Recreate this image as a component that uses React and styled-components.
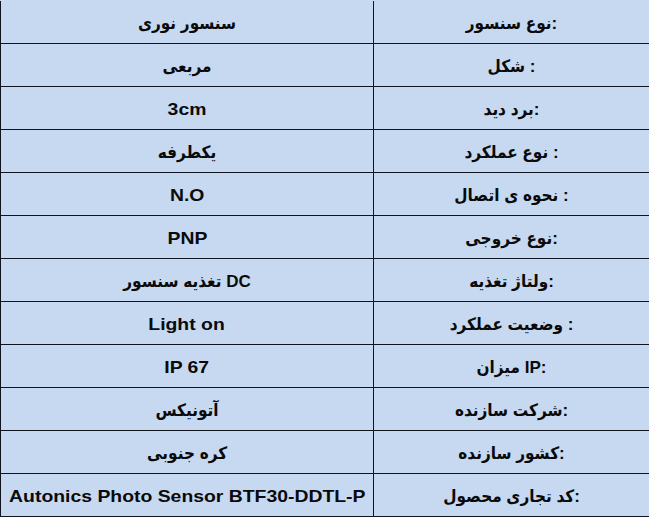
import React from 'react';
import styled, { createGlobalStyle } from 'styled-components';

const GlobalStyle = createGlobalStyle`
  html, body {
    margin: 0;
    padding: 0;
    background-color: #c6d9f1;
  }
`;

const Table = styled.div`
  width: 649px;
  padding-top: 1px;
  background-color: #c6d9f1;
  font-family: 'Liberation Sans', 'DejaVu Sans Condensed', 'DejaVu Sans', Arial, sans-serif;
  font-weight: bold;
  color: #0a0a0a;
`;

const Row = styled.div`
  display: grid;
  grid-template-columns: 276px 373px;
  direction: rtl;
  height: 43px;
  box-sizing: border-box;
  border-bottom: 1px solid #10141c;
`;

const Cell = styled.div`
  display: flex;
  align-items: center;
  justify-content: center;
  box-sizing: border-box;
  padding-top: 3px;
  border-left: 1px solid #10141c;
`;

const Text = styled.span`
  display: inline-block;
  direction: ltr;
  font-size: 17px;
  white-space: nowrap;
  transform: ${(p) => (p.$latin ? 'scaleX(1.14)' : 'none')};
`;

const isLatin = (s) => !/[\u0600-\u06ff]/.test(s);

const specs = [
  ['نوع سنسور:', 'سنسور نوری'],
  ['شکل :', 'مربعی'],
  ['برد دید:', '3cm'],
  ['نوع عملکرد :', 'یکطرفه'],
  ['نحوه ی اتصال :', 'N.O'],
  ['نوع خروجی:', 'PNP'],
  ['ولتاژ تغذیه:', 'تغذیه سنسور DC'],
  ['وضعیت عملکرد :', 'Light on'],
  ['میزان IP:', 'IP 67'],
  ['شرکت سازنده:', 'آتونیکس'],
  ['کشور سازنده:', 'کره جنوبی'],
  ['کد تجاری محصول:', 'Autonics Photo Sensor BTF30-DDTL-P'],
];

const App = () => (
  <>
    <GlobalStyle />
    <Table>
      {specs.map(([label, value]) => (
        <Row key={label}>
          <Cell>
            <Text>{label}</Text>
          </Cell>
          <Cell>
            <Text $latin={isLatin(value)}>{value}</Text>
          </Cell>
        </Row>
      ))}
    </Table>
  </>
);

export default App;
